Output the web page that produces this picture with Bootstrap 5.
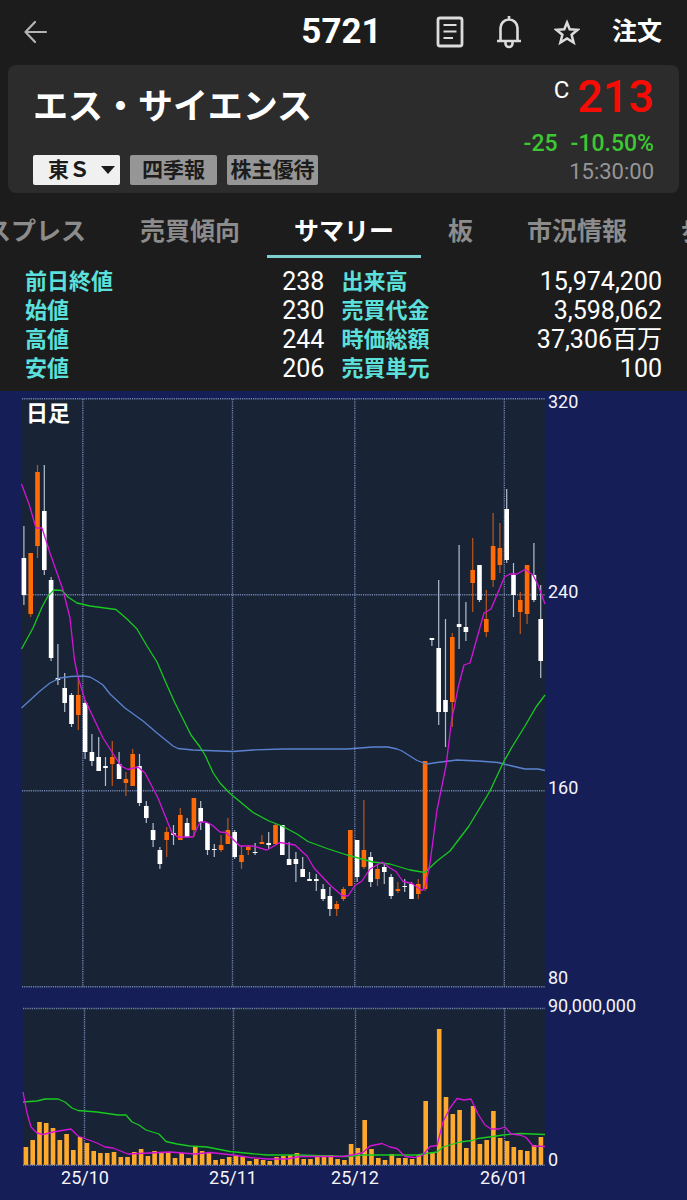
<!DOCTYPE html>
<html lang="ja">
<head>
<meta charset="utf-8">
<meta name="viewport" content="width=device-width, initial-scale=1">
<title>5721 エス・サイエンス</title>
<link href="https://cdn.jsdelivr.net/npm/bootstrap@5.3.0/dist/css/bootstrap.min.css" rel="stylesheet">
<style>
  body { background: #1c1c1c; color: #fff; font-family: Roboto, "Noto Sans CJK JP", sans-serif; }
  .topbar { display: grid; grid-template-columns: 1fr auto 1fr; align-items: center; height: 65px; padding: 0 25px 2px 21px; }
  .topbar h1 { font-size: 35px; line-height: 40px; }
  .tools { gap: 32px; }
  .plain { background: none; border: 0; padding: 0; color: #dcdcdc; line-height: 0; }
  .plain svg { display: block; fill: none; stroke: currentColor; }
  .plain.back { color: #b4b4b4; }
  .order { color: #fff; font-size: 25px; line-height: 32px; font-weight: 700; text-decoration: none; }
  .quote { background: #2c2c2c; border-radius: 8px; margin: 0 8px; padding: 8px 25px; min-height: 128px; }
  .quote h2 { font-size: 35px; line-height: 48px; padding-top: 11px; }
  .chip { font-size: 21px; line-height: 30px; height: 30px; font-weight: 700; border: 0; border-radius: 2px; color: #1c1c1c; background-color: #969696; padding: 0; width: 87px; }
  .chip-wide { width: 91px; }
  select.chip { appearance: none; padding-left: 15px; background: #f0f0f0 url("data:image/svg+xml,%3Csvg xmlns='http://www.w3.org/2000/svg' width='14' height='8'%3E%3Cpath d='M0 0h14L7 8z' fill='%231c1c1c'/%3E%3C/svg%3E") no-repeat right 5px top 11px; }
  .chips { gap: 10px; }
  .price { color: #f60c04; font-size: 45px; line-height: 48px; font-weight: 500; }
  .session { font-size: 24px; line-height: 34px; }
  .change { color: #3cc832; font-size: 23px; line-height: 30px; font-weight: 500; gap: 13px; }
  .stamp { color: #969696; font-size: 22px; line-height: 26px; }
  .tabs { height: 65px; margin-left: -41px; }
  .tabs a { flex: none; padding: 19px 27px 0; color: #8c8c8c; font-size: 25px; line-height: 40px; font-weight: 700; text-decoration: none; border-bottom: 3px solid transparent; }
  .tabs a.active { color: #fff; border-color: #7fcfd0; }
  .stats { margin: 9px 0 8px; padding: 0 25px; }
  .stats table { table-layout: fixed; }
  .stats th, .stats td { padding: 0; height: 29px; line-height: 29px; white-space: nowrap; }
  .stats th { color: #5ce0dc; font-size: 22px; }
  .stats td { font-size: 25px; font-weight: 400; text-align: right; }
  .stats td + th { padding-left: 17px; }
  .chart { background: #161e57; }
  .chart svg { display: block; width: 100%; height: auto; }
  .chart text { fill: #f4f4fa; font-size: 18px; }
  .chart .period { font-size: 22px; font-weight: 700; fill: #fff; }
  .plot { fill: #182436; }
  .gridline { stroke: #7184ad; stroke-width: 1.4; stroke-dasharray: 1.2 1; fill: none; }
  .up { fill: #ff6a06; } .down { fill: #fff; }
  .upwick { fill: #b8571d; } .downwick { fill: #b4bfcc; }
  .bar { fill: #ffa92c; }
  .ma { fill: none; stroke-width: 1.3; stroke-linejoin: round; }
  .short { stroke: #d314d8; } .mid { stroke: #18c91f; } .long { stroke: #5b82cf; }
</style>
</head>
<body>
<header class="topbar">
  <button class="plain back me-auto" aria-label="戻る">
    <svg width="28" height="28" viewBox="0 0 28 28" stroke-width="2.2" stroke-linecap="round" stroke-linejoin="round"><path d="M25 14H5M14 4 4.500 14 14 24"/></svg>
  </button>
  <h1 class="m-0 fw-bold">5721</h1>
  <div class="tools d-flex align-items-center justify-content-end">
    <button class="plain" aria-label="メモ"><svg width="28" height="32" viewBox="0 0 28 32" stroke-width="2.800"><rect x="2" y="2" width="24" height="28" rx="2"/><path d="M7.500 9h13M7.500 15.500h13M7.500 22h9.500" stroke-width="2.200"/></svg></button>
    <button class="plain" aria-label="アラート"><svg width="26" height="34" viewBox="0 0 26 34" stroke-width="2.600"><path d="M1 26h24M4.500 26V13a8.500 8.500 0 0 1 17 0v13M13 1v4M9.500 26.500v2a3.500 3.500 0 0 0 7 0v-2"/></svg></button>
    <button class="plain" aria-label="お気に入り"><svg width="26" height="28" viewBox="0 0 26 28" stroke-width="2.500"><path d="m13 4.500 2.700 6.700 7.900.6-6 5 2 7.700L13 20.400l-6.600 4.100 2-7.700-6-5 7.900-.6z"/></svg></button>
    <a class="order" href="#">注文</a>
  </div>
</header>

<main>
  <section class="quote d-flex justify-content-between">
    <div class="d-flex flex-column justify-content-between">
      <h2 class="m-0 fw-bold">エス・サイエンス</h2>
      <div class="chips d-flex">
        <select class="chip" aria-label="市場"><option>東Ｓ</option></select>
        <button class="chip">四季報</button>
        <button class="chip chip-wide">株主優待</button>
      </div>
    </div>
    <div class="text-end">
      <div class="d-flex justify-content-end gap-2"><span class="session">C</span><span class="price">213</span></div>
      <div class="change d-flex justify-content-end pt-2"><span>-25</span><span>-10.50%</span></div>
      <div class="stamp">15:30:00</div>
    </div>
  </section>

  <div class="overflow-hidden">
    <nav class="tabs d-flex flex-nowrap text-nowrap">
      <a href="#">スプレス</a><a href="#">売買傾向</a><a href="#" class="active" aria-current="page">サマリー</a><a href="#">板</a><a href="#">市況情報</a><a href="#">歩み値</a>
    </nav>
  </div>

  <section class="stats">
    <table class="w-100">
      <colgroup><col style="width:22%"><col style="width:25%"><col style="width:25%"><col style="width:28%"></colgroup>
      <tbody>
        <tr><th scope="row">前日終値</th><td>238</td><th scope="row">出来高</th><td>15,974,200</td></tr>
        <tr><th scope="row">始値</th><td>230</td><th scope="row">売買代金</th><td>3,598,062</td></tr>
        <tr><th scope="row">高値</th><td>244</td><th scope="row">時価総額</th><td>37,306百万</td></tr>
        <tr><th scope="row">安値</th><td>206</td><th scope="row">売買単元</th><td>100</td></tr>
      </tbody>
    </table>
  </section>

  <section class="chart">
    <svg viewBox="0 391 687 809" role="img" aria-label="日足チャート">
      <rect class="plot" x="22" y="399" width="523" height="588"/>
      <rect class="plot" x="23" y="1008" width="522" height="157"/>
      <path class="gridline" d="M22 398.800H545M22 594.800H545M22 790.800H545M22 986.800H545M82.800 399V987M232.500 399V987M354.800 399V987M504.300 399V987"/>
      <path class="gridline" d="M23 1008.500H545M84.500 1008V1165M233.500 1008V1165M355.500 1008V1165M504.600 1008V1165"/>
      <g id="candles"></g>
      <g id="volume"></g>
      <path class="gridline" d="M23 1165.300H545"/>
      <polyline class="ma long" points="21.500,708 40,691 50,683 60,678 71,676.500 83,676 90,677 97,681 103,685 110,694 125,708 143,721 157,733 173,746 178,748.500 193,750 233,751.500 253,750 283,749 347,749 373,747 388,747 397,749 402,751 417,760.500 427,764 437,762.500 457,760 478,761 498,762.500 512,766 525,769 538,769 545,770.500"/>
      <polyline class="ma mid" points="21.500,649 33,628 42,607 48,596 54,590 62,590.500 68,597 77,603 90,606 116,609.500 127,619 137,629 147,646 157,662 166,683 175,703 191,735 200,747 205,755 213,772.500 220,783 229,792.500 253,812.500 269,821 282,826 297,834 308,841.500 327,848.500 347,855 373,862 390,864 410,870 425,872.500 437,861 450,851 469,826 490,791 503,763 512,747 525,726 536,707 545,695"/>
      <polyline class="ma short" points="21.500,484 29,504 36,528 42,528 50,553 63,590 70,618 74.500,660 78,677 85,700 103,738 112,752 121,766 128,769.500 138,767 145,773 158,798 172,833 178,837 193,837 200,822 206,822 212,825 220,832 226,832.500 240,846 253,846 267,850 280,842.500 295,845 307,856 314,868 330,885 342,895.500 348,896 355,885.500 362,881 370,869 382,862 390,868 396,871.500 403,881.500 412,883.500 422,890.500 425,888 430,863 437,810 446,766 452,717 454,709 458,688 464,665 470,663 484,613 491,609 504.500,577 510,574 517,574 525,569.500 533,575 538,585 545,604"/>
      <polyline class="ma mid" points="23,1102 37,1101 45,1099 58,1099 65,1102 72,1108 78,1110.500 97,1112 118,1115 126,1115 132,1122 139,1125 146,1130 159,1134 166,1141.500 177,1144 190,1146 207,1147 230,1151.500 250,1153.500 267,1155 297,1155 347,1156.500 363,1155 417,1155 437,1152 443,1147 460,1142 472,1140.500 478,1138.500 493,1136.500 503,1135 520,1133.500 545,1134.500"/>
      <polyline class="ma short" points="23,1092 27,1113 31,1127 37,1133 43,1134.500 53,1132 71,1129 78,1136 97,1143 105,1147 113,1148 128,1154 170,1152 195,1154 210,1152.500 233,1155 250,1157.500 267,1159 287,1159 300,1156.500 343,1156.500 357,1154 363,1152.500 370,1146 382,1143.500 390,1147 397,1148.500 405,1156.500 415,1157.500 423,1155 430,1146.500 437,1145.500 443,1122 450,1108 457,1098.500 464,1100 471,1099 478,1114 485,1125 491,1129 499,1129 505,1127 511,1134 520,1135 526,1137.500 533,1146 545,1146.500"/>
      <text class="period" x="26" y="421">日足</text>
      <text x="548" y="408">320</text>
      <text x="548" y="598">240</text>
      <text x="548" y="794">160</text>
      <text x="548" y="984">80</text>
      <text x="548" y="1012">90,000,000</text>
      <text x="548" y="1166">0</text>
      <g text-anchor="middle">
        <text x="85" y="1184">25/10</text>
        <text x="233" y="1184">25/11</text>
        <text x="355" y="1184">25/12</text>
        <text x="504" y="1184">26/01</text>
      </g>
    </svg>
  </section>
</main>

<script src="https://cdn.jsdelivr.net/npm/bootstrap@5.3.0/dist/js/bootstrap.bundle.min.js"></script>
<script>
  // One entry per trading day: direction (0 down, 1 up), body top, body bottom, high, low
  const candles = [
    [0,558,595,526,605],[1,553,614,553,617],[1,472,546,465,558],[0,511,570,465,575],[0,580,658,577,661],
    [0,678,680,644,685],[0,688,703,673,712],[0,695,724,693,727],[1,695,715,677,730],[0,703,752,700,759],
    [0,752,761,734,766],[0,757,771,737,771],[0,766,768,757,786],[1,757,764,741,786],[0,764,779,752,779],
    [1,779,783,772,796],[1,754,786,749,786],[0,766,803,754,806],[0,806,818,801,823],[0,830,840,823,847],
    [0,850,864,847,869],[1,832,840,827,857],[0,833,835,825,845],[1,815,840,808,840],[0,823,837,818,837],
    [1,798,830,798,837],[0,808,822,801,830],[0,823,850,823,855],[0,849,850,844,857],[1,845,850,835,852],
    [1,830,844,818,844],[0,832,857,830,859],[1,855,862,845,869],[1,847,850,845,855],[0,852,853,843,855],
    [1,842,844,835,844],[0,843,845,832,849],[1,825,844,824,845],[0,825,855,825,855],[0,859,865,842,865],
    [0,859,864,852,882],[0,869,877,857,877],[0,879,881,872,881],[0,879,881,874,891],[0,889,899,884,901],
    [0,896,909,887,916],[1,904,909,901,916],[1,889,899,887,901],[1,830,886,830,886],[0,840,877,840,882],
    [1,850,867,800,869],[0,857,882,852,887],[1,869,879,864,886],[0,867,872,864,884],[0,877,896,874,899],
    [1,889,891,882,893],[0,886,887,879,892],[0,884,899,882,899],[1,884,894,879,899],[1,761,889,761,891],
    [0,638,640,638,646],[0,648,712,580,725],[0,700,712,619,747],[1,637,702,633,727],[0,624,627,545,649],
    [0,627,632,602,641],[1,570,583,538,612],[0,565,600,565,602],[1,619,632,590,637],[1,546,580,513,587],
    [1,548,565,523,573],[0,509,560,489,563],[0,575,595,563,617],[1,600,612,592,634],[1,565,614,565,624],
    [0,575,600,543,602],[0,619,661,585,678]
  ];
  // Height of each day's volume bar
  const volume = [18,25,43,42,37,25,31,15,28,22,14,12,12,13,8,8,13,16,9,14,12,13,7,12,7,19,14,12,5,6,8,
    9,8,4,6,5,4,8,9,10,12,6,6,10,10,10,6,5,21,17,45,16,7,5,11,7,7,6,10,64,13,136,68,51,55,17,59,21,25,54,27,24,18,15,14,20,28];

  const rect = (cls, x, y, w, h) => `<rect class="${cls}" x="${x.toFixed(1)}" y="${y}" width="${w}" height="${h}"/>`;
  document.getElementById('candles').innerHTML = candles.map(([up, top, bottom, high, low], i) => {
    const x = 23.9 + i * 6.8, kind = up ? 'up' : 'down';
    return rect(kind + 'wick', x - 0.6, high, 1.2, low - high) + rect(kind, x - 2.3, top, 4.6, bottom - top);
  }).join('');
  document.getElementById('volume').innerHTML = volume.map((h, i) =>
    rect('bar', 23.6 + i * 6.776, 1165 - h, 4.6, h)).join('');
</script>
</body>
</html>
